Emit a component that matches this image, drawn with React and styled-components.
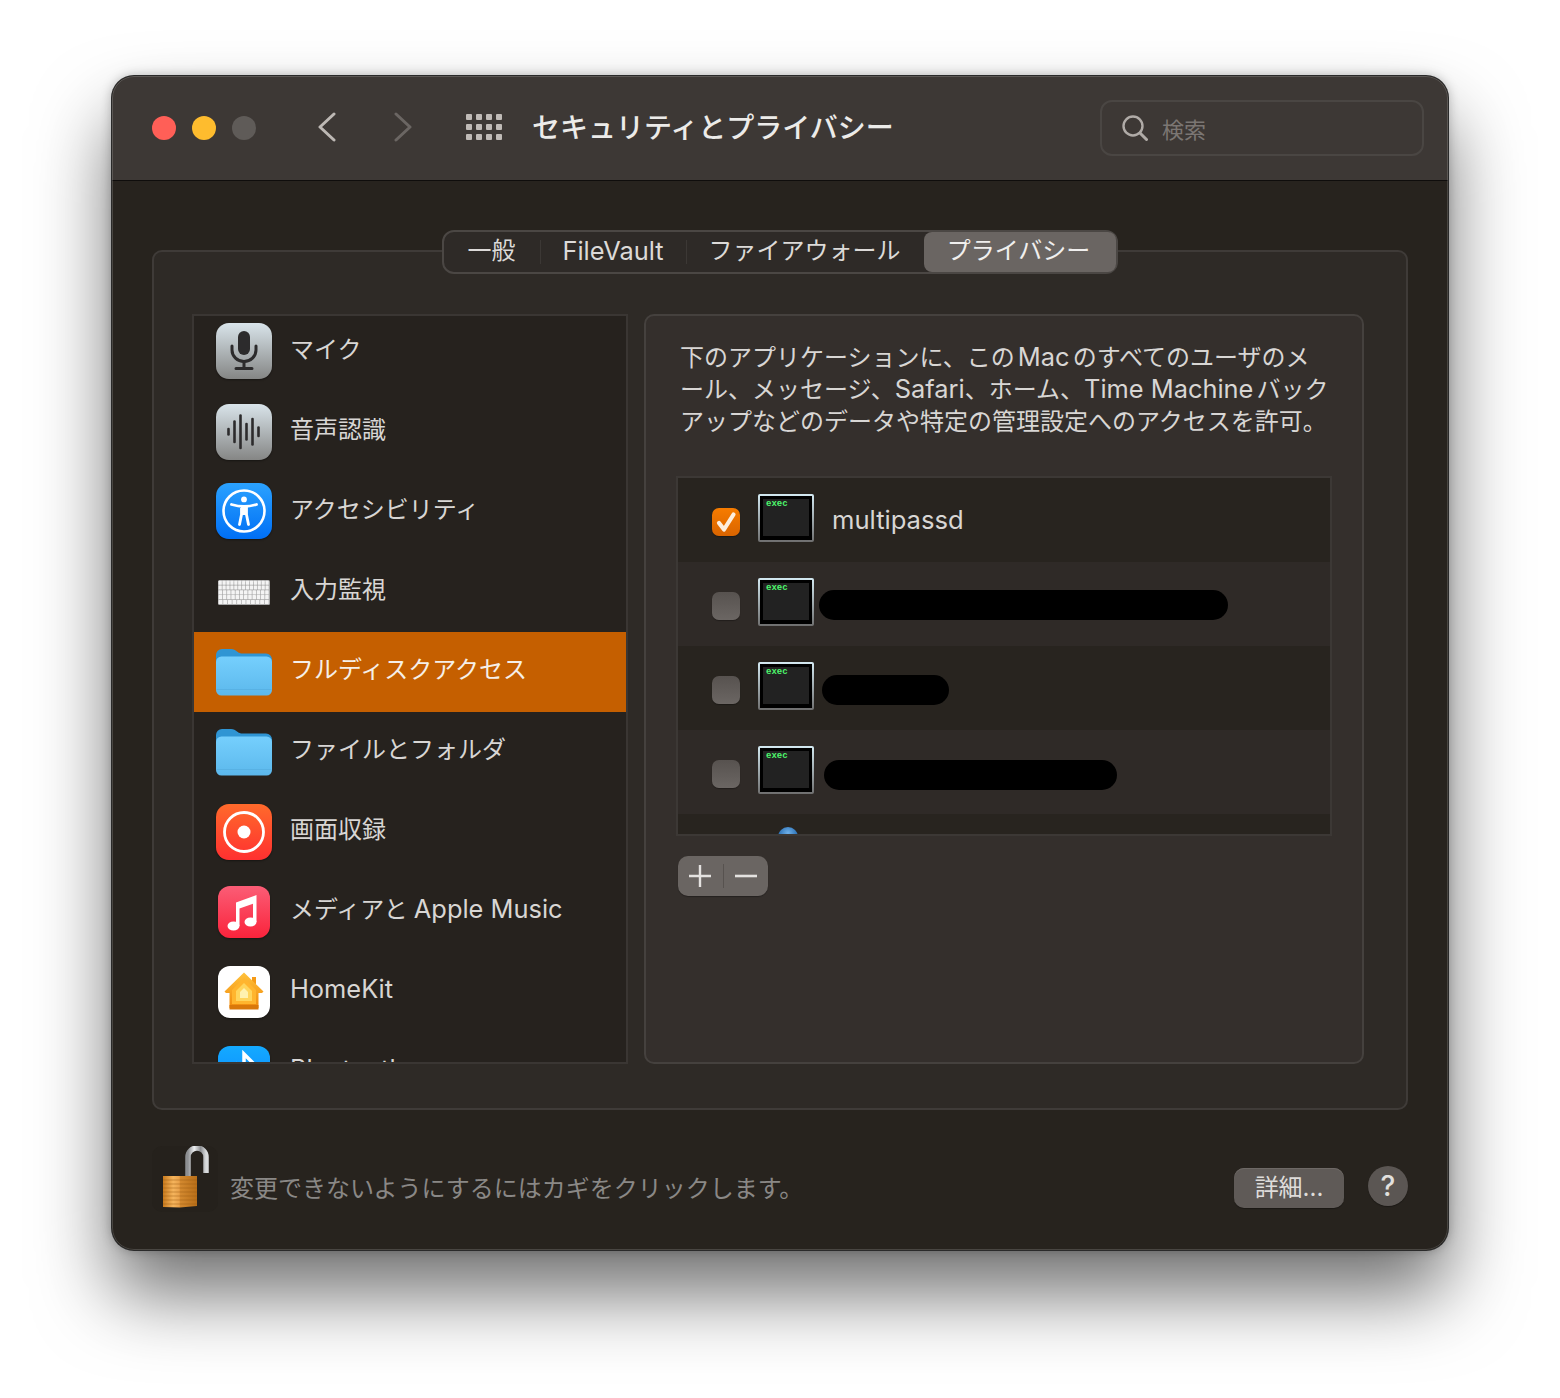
import React from 'react'
import styled, { createGlobalStyle } from 'styled-components'

const GlobalStyle = createGlobalStyle`
  html, body {
    margin: 0;
    background: #fff;
  }
  body {
    font-family: "Inter", "Noto Sans CJK JP", sans-serif;
    text-autospace: normal;
  }
`

const Page = styled.div`
  width: 1560px;
  height: 1398px;
  padding: 76px 112px 0;
  box-sizing: border-box;
  overflow: hidden;
`

const Window = styled.div`
  width: 1336px;
  height: 1174px;
  box-sizing: border-box;
  border-radius: 22px;
  background: #27231e;
  overflow: hidden;
  position: relative;
  box-shadow: 0 0 0 1px #2a2a2a, 0 44px 76px rgba(0, 0, 0, 0.56), 0 0 12px rgba(0, 0, 0, 0.28);
  display: flex;
  flex-direction: column;
  &::after {
    content: '';
    position: absolute;
    inset: 0;
    border: 1px solid rgba(255, 255, 255, 0.16);
    border-radius: 22px;
    pointer-events: none;
  }
`

const Latin = styled.span`
  font-size: 25.4px;
  line-height: 1;
  margin-left: ${p => p.$left || 0}px;
`

const TitleBar = styled.header`
  height: 105px;
  flex: none;
  box-sizing: border-box;
  background: #3d3835;
  border-bottom: 1px solid #0f0d0c;
  display: flex;
  align-items: center;
  padding: 0 24px 0 40px;
`

const Lights = styled.div`
  display: flex;
  gap: 16px;
`

const Light = styled.span`
  width: 24px;
  height: 24px;
  border-radius: 50%;
  background: ${p => p.$color};
`

const NavIcon = styled.svg`
  display: block;
  flex: none;
  margin-left: ${p => p.$left}px;
  margin-top: -2px;
`

const WinTitle = styled.h1`
  margin: -1px 0 0 30px;
  font-size: 28px;
  line-height: 40px;
  font-weight: 500;
  color: #ecebe9;
  white-space: nowrap;
`

const SearchBox = styled.div`
  margin-left: auto;
  width: 324px;
  height: 56px;
  box-sizing: border-box;
  border: 2px solid #4a4643;
  border-radius: 12px;
  display: flex;
  align-items: center;
  gap: 14px;
  padding-left: 20px;
  font-size: 22px;
  color: #7b7673;
`

const Body = styled.main`
  flex: 1;
  display: flex;
  flex-direction: column;
  padding: 69px 40px 0;
`

const Panel = styled.section`
  height: 860px;
  box-sizing: border-box;
  border: 2px solid #3f3b38;
  border-radius: 10px;
  background: #2e2a26;
  display: flex;
  flex-direction: column;
  align-items: center;
`

const Tabs = styled.div`
  margin-top: -22px;
  height: 44px;
  box-sizing: border-box;
  border: 2px solid #4b4744;
  border-radius: 12px;
  background: #2e2a27;
  display: flex;
  align-items: stretch;
`

const Tab = styled.div`
  width: ${p => p.$width}px;
  box-sizing: border-box;
  padding: 0 ${p => (p.$active ? 3 : 2)}px 2px 0;
  display: flex;
  align-items: center;
  justify-content: center;
  font-size: 24px;
  line-height: 38px;
  color: ${p => (p.$active ? '#f0efee' : '#dcdad8')};
  background: ${p => (p.$active ? '#6a6562' : 'transparent')};
  border-radius: ${p => (p.$active ? '8px' : '0')};
  white-space: nowrap;
  position: relative;
  &::after {
    content: '';
    display: ${p => (p.$sep ? 'block' : 'none')};
    position: absolute;
    right: 0;
    top: 8px;
    bottom: 8px;
    width: 1px;
    background: #3c3835;
  }
`

const Columns = styled.div`
  margin-top: 40px;
  align-self: stretch;
  padding: 0 42px 0 38px;
  display: grid;
  grid-template-columns: 436px 720px;
  gap: 16px;
`

const AppList = styled.div`
  height: 750px;
  box-sizing: border-box;
  border: 2px solid #3a3633;
  background: #26221e;
  overflow: hidden;
`

const AppScroll = styled.div`
  margin-top: -4px;
`

const AppRow = styled.div`
  height: 80px;
  display: flex;
  align-items: center;
  padding-left: 22px;
  gap: 18px;
  background: ${p => (p.$selected ? '#c55f00' : 'transparent')};
`

const AppLabel = styled.span`
  font-size: 24px;
  line-height: 32px;
  margin-top: -4px;
  color: ${p => (p.$selected ? '#f6efe8' : '#d8d6d4')};
  white-space: nowrap;
`

const IconSlot = styled.div`
  width: 56px;
  height: 56px;
  flex: none;
  display: flex;
  align-items: center;
  justify-content: center;
  margin-top: ${p => p.$top || 0}px;
`

const GlobeSlot = styled.div`
  width: 66px;
  flex: none;
`

const Tile = styled.div`
  width: ${p => p.$size}px;
  height: ${p => p.$size}px;
  border-radius: ${p => (p.$size === 56 ? 13 : 12)}px;
  background: ${p => p.$bg};
  box-shadow: 0 1px 2px rgba(0, 0, 0, 0.4);
  flex: none;
  svg {
    display: block;
  }
`

const Detail = styled.div`
  height: 750px;
  box-sizing: border-box;
  border: 2px solid #45413e;
  border-radius: 10px;
  background: #342f2c;
  padding: 26px 30px 0;
`

const Description = styled.p`
  margin: 0 0 0 4px;
  font-size: 24px;
  line-height: 32px;
  color: #d8d6d4;
  white-space: nowrap;
`

const ExecTable = styled.div`
  margin-top: 38px;
  width: 656px;
  height: 360px;
  box-sizing: border-box;
  border: 2px solid #3c3835;
  overflow: hidden;
`

const ExecRow = styled.div`
  height: 84px;
  flex: none;
  display: flex;
  align-items: center;
  padding-left: 34px;
  background: ${p => (p.$odd ? '#28241f' : '#2f2a27')};
`

const CheckBox = styled.span`
  width: 28px;
  height: 28px;
  flex: none;
  margin-top: 4px;
  border-radius: 7px;
  background: ${p => (p.$checked
    ? 'linear-gradient(#f77c00, #d96400)'
    : 'linear-gradient(#57524f, #6b6663)')};
  box-shadow: 0 1px 1px rgba(0, 0, 0, 0.3);
  display: flex;
  align-items: center;
  justify-content: center;
`

const ExecIcon = styled.div`
  width: 56px;
  height: 48px;
  flex: none;
  margin: -4px 0 0 18px;
  box-sizing: border-box;
  padding: 2px;
  background: linear-gradient(#d4eaf2, #6f6f6f);
  border-radius: 2px;
`

const ExecScreen = styled.div`
  height: 100%;
  box-sizing: border-box;
  background: #222;
  border: solid #000;
  border-width: 3px 3px 4px;
  padding: 1px 0 0 3px;
  font-family: "Liberation Mono", monospace;
  font-size: 9px;
  line-height: 9px;
  font-weight: 700;
  color: #4df56c;
`

const ExecName = styled.span`
  margin-left: 18px;
  font-size: 25.6px;
  line-height: 32px;
  color: #d8d6d4;
`

const Redacted = styled.span`
  display: block;
  height: 30px;
  border-radius: 15px;
  background: #000;
  width: ${p => p.$width}px;
  margin-left: ${p => p.$left}px;
  margin-top: ${p => p.$top}px;
`

const Globe = styled.span`
  width: 20px;
  height: 20px;
  margin-top: 13px;
  align-self: flex-start;
  border-radius: 50%;
  background: radial-gradient(circle at 50% 30%, #6fb0e8, #1f66ad 65%, #0d3a66);
`

const AddRemove = styled.div`
  margin: 20px 0 0 2px;
  width: 90px;
  height: 40px;
  border-radius: 10px;
  background: #6a6562;
  box-shadow: 0 1px 1px rgba(0, 0, 0, 0.3);
  display: flex;
  align-items: center;
`

const Segment = styled.span`
  width: 45px;
  display: flex;
  justify-content: center;
  svg {
    display: block;
  }
`

const Divider = styled.span`
  width: 1px;
  height: 24px;
  background: #57524f;
  flex: none;
`

const Footer = styled.footer`
  flex: 1;
  display: flex;
  align-items: center;
`

const LockBox = styled.div`
  width: 66px;
  height: 66px;
  flex: none;
  margin-top: -2px;
  border-radius: 10px;
  background: #25211c;
  svg {
    display: block;
  }
`

const LockText = styled.span`
  margin: 18px 0 0 12px;
  font-size: 24px;
  line-height: 32px;
  color: #8a8886;
  white-space: nowrap;
`

const DetailButton = styled.button`
  margin: 16px 0 0 auto;
  width: 110px;
  height: 40px;
  border: 0;
  border-radius: 10px;
  padding: 0;
  background: #5f5a57;
  box-shadow: inset 0 1px 0 #6e6966, 0 1px 1px rgba(0, 0, 0, 0.3);
  color: #dedcda;
  font: inherit;
  font-size: 24px;
  line-height: 36px;
`

const HelpButton = styled.button`
  margin: 12px 0 0 24px;
  width: 40px;
  height: 40px;
  border: 0;
  border-radius: 50%;
  padding: 0;
  background: #5b5653;
  box-shadow: 0 1px 1px rgba(0, 0, 0, 0.3);
  color: #e2e0de;
  font: inherit;
  font-size: 28px;
  font-weight: 500;
`

const GREY_TILE = 'linear-gradient(#d9e4ea, #858685)'

const MicIcon = () => (
  <Tile $size={56} $bg={GREY_TILE}>
    <svg width="56" height="56" viewBox="0 0 56 56" fill="none" stroke="#2c2b2c" strokeWidth="3">
      <rect x="22" y="8" width="12" height="24" rx="6" fill="#2c2b2c" stroke="none" />
      <path d="M16 23v4a12 11.5 0 0 0 24 0v-4" strokeLinecap="round" />
      <path d="M28 39v6M20 45.5h16" strokeLinecap="round" />
    </svg>
  </Tile>
)

const VOICE_BARS = [[12.5, 8], [18.5, 23], [24.5, 35], [30.5, 18], [36.5, 28], [42.5, 11]]

const VoiceIcon = () => (
  <Tile $size={56} $bg={GREY_TILE}>
    <svg width="56" height="56" viewBox="0 0 56 56" fill="#2c2b2c">
      {VOICE_BARS.map(([x, h]) => (
        <rect key={x} x={x - 1.3} y={27.7 - h / 2} width="2.6" height={h} rx="1.3" />
      ))}
    </svg>
  </Tile>
)

const AccessIcon = () => (
  <Tile $size={56} $bg="linear-gradient(#2ba2ff, #006ff5)">
    <svg width="56" height="56" viewBox="0 0 56 56" fill="none" stroke="#fff">
      <circle cx="28" cy="28" r="20.5" strokeWidth="2.6" />
      <circle cx="28" cy="16.4" r="2.9" fill="#fff" stroke="none" />
      <path
        d="M15.5 21.5c4 1.2 8 2 12.5 2s8.5-.8 12.5-2M25.5 23.5v8l-2 10M30.5 23.5v8l2 10"
        strokeWidth="2.8"
        strokeLinecap="round"
      />
      <rect x="25" y="23" width="6" height="9" fill="#fff" stroke="none" />
    </svg>
  </Tile>
)

const KEY_ROWS = [13, 13, 12, 12, 11]

const KeyboardIcon = () => (
  <svg width="52" height="25" viewBox="0 0 52 25">
    <rect width="52" height="25" rx="1.5" fill="#a9a9a9" />
    {KEY_ROWS.map((count, row) =>
      Array.from({ length: count }, (_, i) => (
        <rect
          key={`${row}-${i}`}
          x={0.6 + (i * 50.8) / count}
          y={0.7 + row * 4.8}
          width={50.8 / count - 0.7}
          height="4.1"
          rx="0.5"
          fill="#f4f4f4"
        />
      ))
    )}
  </svg>
)

const FolderIcon = ({ id }) => (
  <svg width="56" height="56" viewBox="0 1 56 56">
    <defs>
      <linearGradient id={id} x1="0" y1="0" x2="0" y2="1">
        <stop offset="0" stopColor="#75cffd" />
        <stop offset="1" stopColor="#5cb8ec" />
      </linearGradient>
    </defs>
    <path
      d="M0 12a6 6 0 0 1 6-6h9c3 0 4 1 6 2.5s3 2 6 2h23a6 6 0 0 1 6 6v8H0z"
      fill="#2f95d4"
    />
    <rect y="13.5" width="56" height="39" rx="5.5" fill={`url(#${id})`} />
    <path d="M.5 46.5h55" stroke="#55aee0" strokeWidth=".7" />
  </svg>
)

const RecordIcon = () => (
  <Tile $size={56} $bg="linear-gradient(#ff6a2b, #ff3030)">
    <svg width="56" height="56" viewBox="0 0 56 56" fill="none">
      <circle cx="28" cy="28" r="19.5" stroke="#fff" strokeWidth="2.8" />
      <circle cx="28" cy="28" r="6.5" fill="#fff" />
    </svg>
  </Tile>
)

const MusicIcon = () => (
  <Tile $size={52} $bg="linear-gradient(#fb5d76, #fa233b)">
    <svg width="52" height="52" viewBox="0 0 52 52" fill="#fff">
      <path d="M18 16.5 38.5 9v27H35V17.8l-13.5 4.800V40H18z" />
      <ellipse cx="15.5" cy="40" rx="6" ry="4.5" />
      <ellipse cx="32.5" cy="36" rx="6" ry="4.5" />
    </svg>
  </Tile>
)

const HomeIcon = () => (
  <Tile $size={52} $bg="#fff">
    <svg width="52" height="52" viewBox="0 0 52 52">
      <defs>
        <linearGradient id="homeRoof" x1="0" y1="0" x2="0" y2="1">
          <stop offset="0" stopColor="#ffc23c" />
          <stop offset="1" stopColor="#f08a0c" />
        </linearGradient>
      </defs>
      <path d="M34 11h4v7h-4z" fill="#f59a16" />
      <path d="M26 6.5 6.500 25.500 8 27h3.500v15h29V27H44l1.500-1.500z" fill="url(#homeRoof)" />
      <path d="M11.5 39h29v4.500h-29z" fill="#d9780a" />
      <path d="M26 12 14 24v14h24V24z" fill="#ffb52e" />
      <path d="M26 17 18 25v10h16V25z" fill="#ffd55c" />
      <path d="M26 22 22 26v6h8v-6z" fill="#fff2b0" />
    </svg>
  </Tile>
)

const BluetoothIcon = () => (
  <Tile $size={52} $bg="linear-gradient(#14aaff, #0a84ff)">
    <svg width="52" height="52" viewBox="0 0 52 52" fill="none" stroke="#fff" strokeWidth="3.5">
      <path d="M17 17l18 18-9 9V8l9 9-18 18" />
    </svg>
  </Tile>
)

const CheckMark = () => (
  <svg width="22" height="22" viewBox="0 0 22 22" fill="none">
    <path d="M4 12l5 6.500L18.500 3.500" stroke="#fdeede" strokeWidth="4.2" strokeLinecap="round" strokeLinejoin="round" />
  </svg>
)

const LockIcon = () => (
  <svg width="66" height="66" viewBox="0 0 66 66">
    <defs>
      <linearGradient id="shackle" x1="0" y1="0" x2="1" y2="0">
        <stop offset="0" stopColor="#8d8f92" />
        <stop offset=".35" stopColor="#eceef0" />
        <stop offset=".7" stopColor="#8b8d90" />
        <stop offset="1" stopColor="#d9dbdd" />
      </linearGradient>
      <linearGradient id="lockBody" x1="0" y1="0" x2="1" y2="0">
        <stop offset="0" stopColor="#c97a1d" />
        <stop offset=".3" stopColor="#f5b45c" />
        <stop offset=".48" stopColor="#e9a14a" />
        <stop offset=".5" stopColor="#d48a30" />
        <stop offset="1" stopColor="#b86e18" />
      </linearGradient>
    </defs>
    <path d="M36 30V11a9 9 0 0 1 18 0v16" fill="none" stroke="url(#shackle)" strokeWidth="5.5" />
    <path d="M11 30h34v30l-17 1.500-17-.500z" fill="url(#lockBody)" />
    {[34, 38, 42, 46, 50, 54, 58].map(y => (
      <path key={y} d={`M11 ${y}h34`} stroke="#9a5a12" strokeOpacity=".45" strokeWidth="1" />
    ))}
  </svg>
)

const apps = [
  { id: 'mic', label: 'マイク', icon: <MicIcon />, top: -2 },
  { id: 'voice', label: '音声認識', icon: <VoiceIcon /> },
  { id: 'access', label: 'アクセシビリティ', icon: <AccessIcon />, top: -2 },
  { id: 'keys', label: '入力監視', icon: <KeyboardIcon /> },
  { id: 'full', label: 'フルディスクアクセス', icon: <FolderIcon id="folderA" />, selected: true },
  { id: 'files', label: 'ファイルとフォルダ', icon: <FolderIcon id="folderB" /> },
  { id: 'screen', label: '画面収録', icon: <RecordIcon /> },
  { id: 'media', label: <>メディアと<Latin $left={3}>Apple Music</Latin></>, icon: <MusicIcon /> },
  { id: 'home', label: <Latin>HomeKit</Latin>, icon: <HomeIcon /> },
  { id: 'bt', label: <Latin>Bluetooth</Latin>, icon: <BluetoothIcon /> },
]

const redactions = [
  { width: 409, left: 5, top: 2 },
  { width: 127, left: 8, top: 4 },
  { width: 293, left: 10, top: 6 },
]

const tabs = [
  { id: 'general', label: '一般', width: 97, sep: true },
  { id: 'vault', label: <Latin>FileVault</Latin>, width: 146, sep: true },
  { id: 'firewall', label: 'ファイアウォール', width: 237 },
  { id: 'privacy', label: 'プライバシー', width: 192, active: true },
]

const App = () => {
  return (
    <Page>
      <GlobalStyle />
      <Window>
        <TitleBar>
          <Lights>
            <Light $color="#ff5f57" />
            <Light $color="#febc2e" />
            <Light $color="#5f5b58" />
          </Lights>
          <NavIcon $left={61} width="20" height="30" viewBox="0 0 20 30" fill="none" stroke="#bdb8b4" strokeWidth="3" strokeLinecap="round" strokeLinejoin="round">
            <path d="M17 2 3 15l14 13" />
          </NavIcon>
          <NavIcon $left={56} width="20" height="30" viewBox="0 0 20 30" fill="none" stroke="#6b6663" strokeWidth="3" strokeLinecap="round" strokeLinejoin="round">
            <path d="M3 2l14 13L3 28" />
          </NavIcon>
          <NavIcon $left={53} width="36" height="26" viewBox="0 0 36 26" fill="#c0bbb7">
            {[0, 10, 20].map(y =>
              [0, 10, 20, 30].map(x => <rect key={`${x}-${y}`} x={x} y={y} width="6" height="6" rx="1" />)
            )}
          </NavIcon>
          <WinTitle>セキュリティとプライバシー</WinTitle>
          <SearchBox>
            <svg width="26" height="26" viewBox="0 0 26 26" fill="none" stroke="#b0aba7" strokeWidth="2.4" strokeLinecap="round">
              <circle cx="11" cy="11" r="9.5" />
              <path d="M18 18l6.5 6.5" strokeWidth="3" />
            </svg>
            <span>検索</span>
          </SearchBox>
        </TitleBar>
        <Body>
          <Panel>
            <Tabs>
              {tabs.map(t => (
                <Tab key={t.id} $width={t.width} $sep={t.sep} $active={t.active}>{t.label}</Tab>
              ))}
            </Tabs>
            <Columns>
              <AppList>
                <AppScroll>
                  {apps.map(a => (
                    <AppRow key={a.id} $selected={a.selected}>
                      <IconSlot $top={a.top}>{a.icon}</IconSlot>
                      <AppLabel $selected={a.selected}>{a.label}</AppLabel>
                    </AppRow>
                  ))}
                </AppScroll>
              </AppList>
              <Detail>
                <Description>
                  下のアプリケーションに、この<Latin>Mac</Latin>のすべてのユーザのメ<br />
                  ール、メッセージ、<Latin>Safari</Latin>、ホーム、<Latin>Time Machine</Latin>バック<br />
                  アップなどのデータや特定の管理設定へのアクセスを許可。
                </Description>
                <ExecTable>
                  <ExecRow $odd>
                    <CheckBox $checked><CheckMark /></CheckBox>
                    <ExecIcon><ExecScreen>exec</ExecScreen></ExecIcon>
                    <ExecName>multipassd</ExecName>
                  </ExecRow>
                  {redactions.map((r, i) => (
                    <ExecRow key={r.width} $odd={i % 2 === 1}>
                      <CheckBox />
                      <ExecIcon><ExecScreen>exec</ExecScreen></ExecIcon>
                      <Redacted $width={r.width} $left={r.left} $top={r.top} />
                    </ExecRow>
                  ))}
                  <ExecRow $odd>
                    <GlobeSlot />
                    <Globe />
                  </ExecRow>
                </ExecTable>
                <AddRemove>
                  <Segment>
                    <svg width="22" height="22" viewBox="0 0 22 22" stroke="#e4e2e0" strokeWidth="2.4">
                      <path d="M0 11h22M11 0v22" />
                    </svg>
                  </Segment>
                  <Divider />
                  <Segment>
                    <svg width="22" height="22" viewBox="0 0 22 22" stroke="#e4e2e0" strokeWidth="2.6">
                      <path d="M0 11h22" />
                    </svg>
                  </Segment>
                </AddRemove>
              </Detail>
            </Columns>
          </Panel>
          <Footer>
            <LockBox><LockIcon /></LockBox>
            <LockText>変更できないようにするにはカギをクリックします。</LockText>
            <DetailButton>詳細...</DetailButton>
            <HelpButton>?</HelpButton>
          </Footer>
        </Body>
      </Window>
    </Page>
  )
}

export default App
